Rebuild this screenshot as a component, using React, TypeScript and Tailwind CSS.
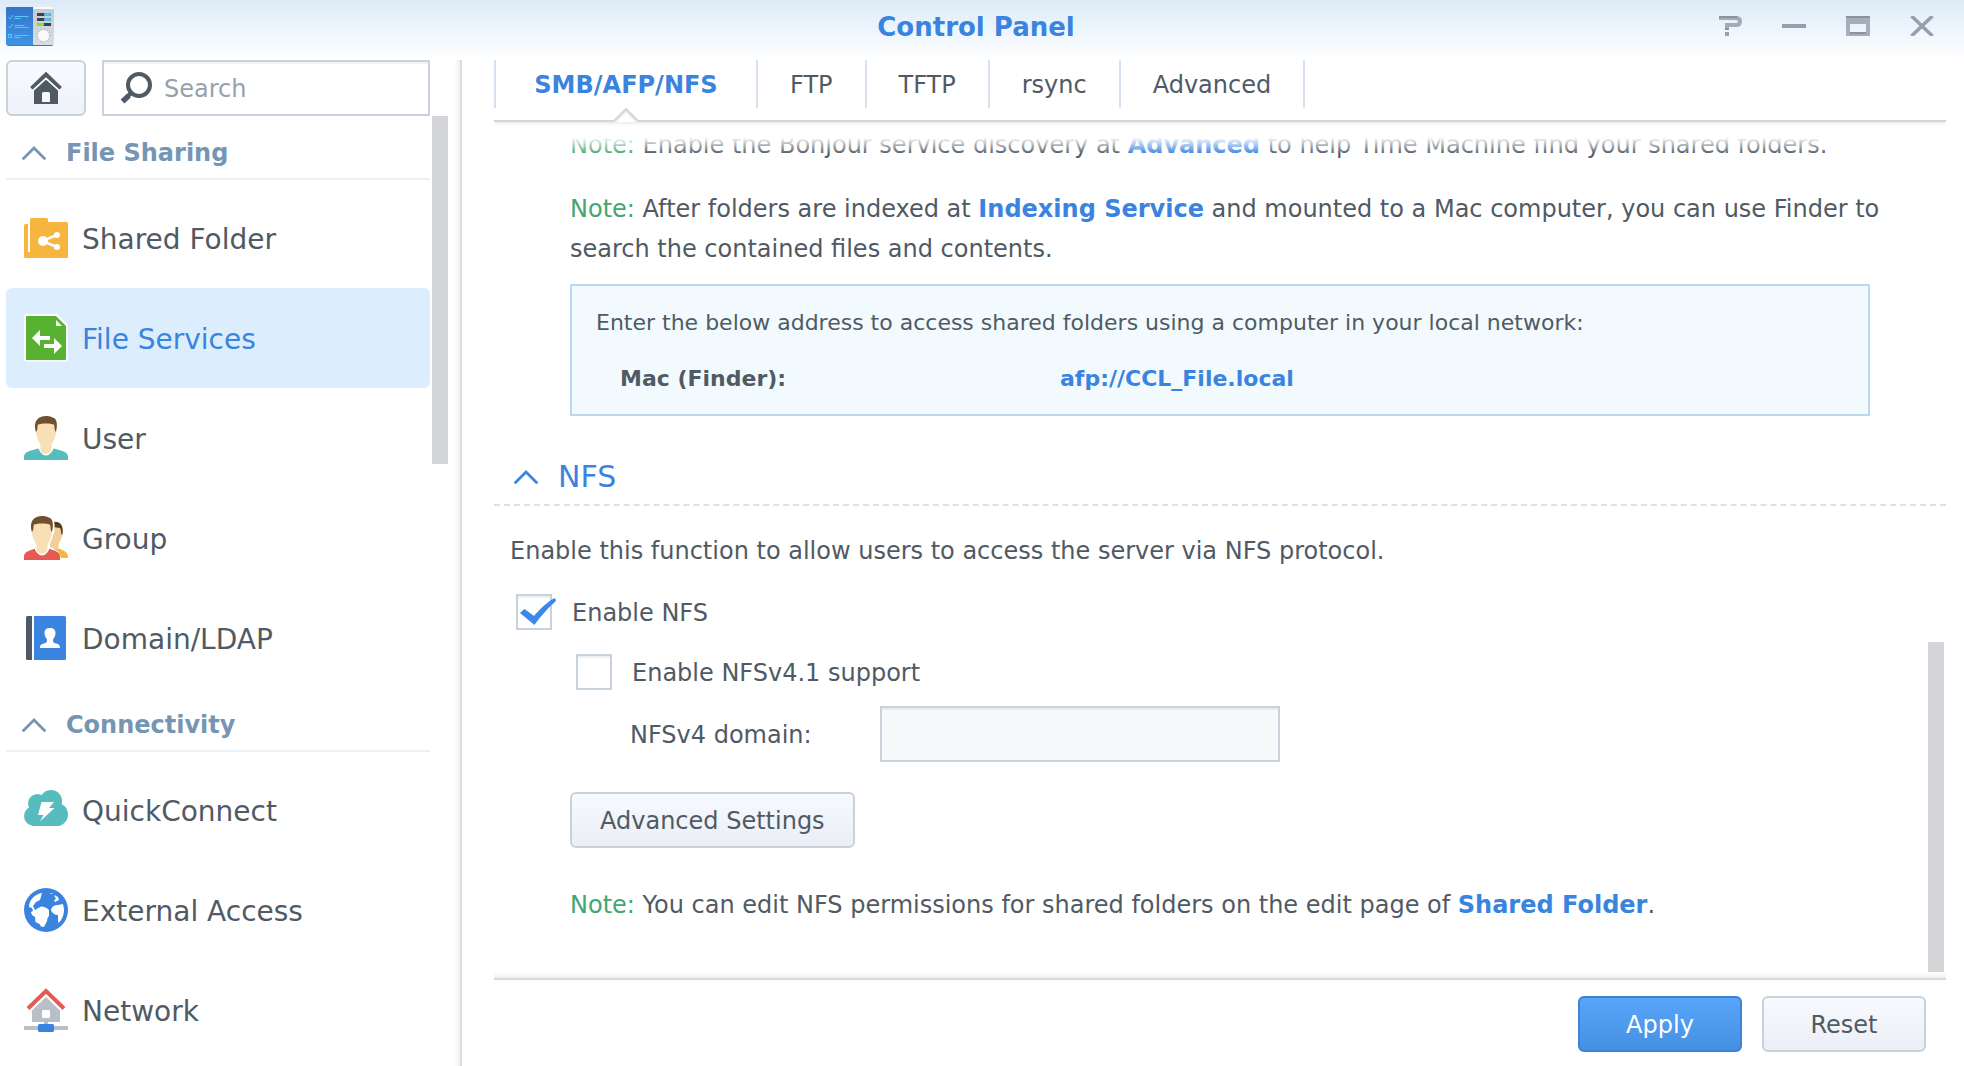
import React, { useState } from "react";

type IconProps = { className?: string };

const AppLogo = () => (
  <svg width="48" height="42" viewBox="0 0 48 42" className="mt-1" aria-hidden="true">
    <defs>
      <linearGradient id="logoBlue" x1="0" y1="0" x2="0" y2="1">
        <stop offset="0" stopColor="#3375c8" />
        <stop offset="1" stopColor="#3f93e4" />
      </linearGradient>
      <linearGradient id="logoGrey" x1="0" y1="0" x2="0" y2="1">
        <stop offset="0" stopColor="#c3cad0" />
        <stop offset="1" stopColor="#d9dee2" />
      </linearGradient>
    </defs>
    <rect x="1" y="35" width="46" height="4" rx="1" fill="#6b7178" />
    <rect x="0" y="0" width="28" height="38" rx="1" fill="url(#logoBlue)" />
    <rect x="27" y="0" width="21" height="38" rx="1" fill="url(#logoGrey)" />
    <rect x="27" y="0" width="21" height="2" rx="1" fill="#f6f8fa" />
    <g stroke="#5fc4f7" fill="none" strokeWidth="1">
      <path d="M2.5 10.5l1.500 1.500 3-4M2.500 19.500l1.500 1.500 3-4" />
      <rect x="2.500" y="27.500" width="3" height="3" />
      <path d="M8.500 9.500h14M8.500 11.500h6M8.500 18.500h10M8.500 20.500h14M8.500 28.500h14M8.500 30.500h6" />
    </g>
    <rect x="31" y="6" width="14" height="3" fill="#3c4249" />
    <rect x="38" y="6" width="7" height="3" rx="1" fill="#52bdf5" />
    <rect x="31" y="11" width="14" height="3" fill="#3c4249" />
    <rect x="38" y="11" width="7" height="3" rx="1" fill="#52bdf5" />
    <rect x="31" y="16" width="14" height="3" fill="#3c4249" />
    <rect x="31" y="16" width="7" height="3" rx="1" fill="#8de03c" />
    <circle cx="37.500" cy="28.500" r="6.500" fill="none" stroke="#a3abb3" strokeWidth="1" strokeDasharray="1 2" />
    <circle cx="37.500" cy="28.500" r="5.500" fill="#f7fbfd" />
  </svg>
);

const HomeIcon = () => (
  <svg width="32" height="32" viewBox="0 0 32 32" aria-hidden="true">
    <path d="M1.500 16.500L16 2.500l14.500 14" fill="none" stroke="#505a64" strokeWidth="4" />
    <path d="M4 18.500L16 7.500l12 11V32H4z" fill="#505a64" />
    <path d="M2.500 18.500L16 6.500l13.500 12" fill="none" stroke="#f6f9fd" strokeWidth="1.500" />
    <path d="M12 30v-8.500q0-1.500 1.500-1.500h5q1.500 0 1.500 1.500V30z" fill="#f6f8fc" />
  </svg>
);

const SearchIcon = () => (
  <svg width="32" height="32" viewBox="0 0 32 32" aria-hidden="true">
    <circle cx="19" cy="13" r="11" fill="none" stroke="#505a64" strokeWidth="4" />
    <path d="M11 21l-3 3" stroke="#505a64" strokeWidth="4" />
    <path d="M9 23.500l-6.500 6" stroke="#505a64" strokeWidth="5.500" />
  </svg>
);

const Chevron = ({ className }: IconProps) => (
  <svg width="24" height="14" viewBox="0 0 24 14" className={className} aria-hidden="true">
    <path d="M1.500 12.500L12 2l10.500 10.500" fill="none" stroke="currentColor" strokeWidth="2.800" strokeLinecap="round" />
  </svg>
);

const FolderIcon = () => (
  <svg width="48" height="48" viewBox="0 0 48 48" aria-hidden="true">
    <rect x="2" y="10" width="8" height="34" rx="1.500" fill="#f5b53f" />
    <path d="M7 9.500v28.500" stroke="#fff" strokeWidth="2" />
    <path d="M8 5.500Q8 4 9.500 4h15Q26 4 26 5.500V8h18.500Q46 8 46 9.500v33q0 1.500-1.500 1.500H8z" fill="#f5b53f" />
    <path d="M35 21L20 27l15 6" fill="none" stroke="#fff" strokeWidth="2.500" />
    <circle cx="21" cy="27" r="5" fill="#fff" />
    <circle cx="35" cy="21" r="3" fill="#fff" />
    <circle cx="35" cy="33" r="3" fill="#fff" />
  </svg>
);

const FileServicesIcon = () => (
  <svg width="48" height="48" viewBox="0 0 48 48" aria-hidden="true">
    <path d="M4.500 0H35l11 11v33.500q0 3-3 3H5q-3 0-3-3V3q0-3 2.500-3z" fill="#fff" />
    <path d="M5 2h29l10 10v33q0 1-1 1H5q-1 0-1-1V3q0-1 1-1z" fill="#58b232" />
    <path d="M34 6v6h6z" fill="#fff" />
    <path d="M10 24l8-8v6h10v4H18v6zM40 32l-8-8v6H22v4h10v6z" fill="#fff" />
  </svg>
);

const UserIcon = () => (
  <svg width="48" height="48" viewBox="0 0 48 48" aria-hidden="true">
    <path d="M2 46v-3c0-5 5-6 14-8.500l8 5.500 8-5.500C41 37 46 38 46 43v3z" fill="#57bcbd" />
    <path d="M17.500 32.500c0 4 3 8 6.500 8s6.500-4 6.500-8z" fill="#f9dfb5" stroke="#fff" strokeWidth="2" />
    <path d="M14 9h20v9c0 6-3.500 9.500-4.500 13.500 0 4 .5 8-5.500 8s-5.500-4-5.500-8C17.500 27.500 14 24 14 18z" fill="#f9dfb5" />
    <path d="M14 18c-2-6-2-15.500 10-16 5 0 6 1.500 8 2 4 2 3 10 2 14-2-2-1-5-2-7.500-4-1.500-12-1.500-16 0-1 2.500 0 5.500-2 7.500z" fill="#71502f" />
  </svg>
);

const GroupIcon = () => (
  <svg width="48" height="48" viewBox="0 0 48 48" aria-hidden="true">
    <path d="M32 34l6 1c5 2 8 3.500 8 8.500v0.500H34z" fill="#f8b53c" />
    <path d="M28 12h12v9c0 5-3 7-3.500 10 .5 2 1 4-3.500 4l-5-2z" fill="#f3cf98" />
    <path d="M31 8c7-1 11 3 9.500 13-2-1-1-5-2.500-7l-7-1z" fill="#573c1e" />
    <path d="M10 5h20l2 2c1 5 1 10-1 15l-3 8v4l8 3 4 9H16z" fill="#fff" />
    <path d="M2 46v-3c0-5 4-6 11-8.500l7 5.500 7-5.500c7 2.500 11 3.500 11 8.500v3z" fill="#e75a54" />
    <path d="M13.500 32.500c0 4 3 8 6.500 8s6.500-4 6.500-8z" fill="#f9dfb5" stroke="#fff" strokeWidth="2" />
    <path d="M10 9h20v9c0 6-3.500 9.500-4.500 13.500 0 4 .5 8-5.500 8s-5.500-4-5.500-8C13.500 27.500 10 24 10 18z" fill="#f9dfb5" />
    <path d="M10 18C8 12 8 2.500 20 2c5 0 6 1.500 8 2 4 2 3 10 2 14-2-2-1-5-2-7.500-4-1.500-12-1.500-16 0-1 2.500 0 5.500-2 7.500z" fill="#71502f" />
  </svg>
);

const DomainIcon = () => (
  <svg width="48" height="48" viewBox="0 0 48 48" aria-hidden="true">
    <path d="M5.500 2H10v44H5.500Q4 46 4 44.500v-41Q4 2 5.500 2z" fill="#505a64" />
    <path d="M12 2h30.500Q44 2 44 3.500v41q0 1.500-1.500 1.500H12z" fill="#3a84e0" />
    <path d="M28 14c4 0 5.500 2 5.500 5s-1.500 5-2.500 6.500c0 2.500 0 3 3 4 3 .8 4 1.500 4 4.500H18c0-3 1-3.700 4-4.500 3-1 3-1.500 3-4-1-1.500-2.500-3.500-2.500-6.500s1.500-5 5.500-5z" fill="#fff" />
  </svg>
);

const QuickConnectIcon = () => (
  <svg width="48" height="48" viewBox="0 0 48 48" aria-hidden="true">
    <g fill="#57bcbd">
      <circle cx="12" cy="30" r="10" />
      <circle cx="15.500" cy="17.500" r="9.500" />
      <circle cx="29" cy="15" r="11" />
      <circle cx="34.500" cy="28.500" r="11.500" />
      <rect x="10" y="18" width="26" height="22" />
    </g>
    <path d="M19.500 16H32l-5 6h5.500L18 35.500 21.500 29H16z" fill="#fff" />
  </svg>
);

const GlobeIcon = () => (
  <svg width="48" height="48" viewBox="0 0 48 48" aria-hidden="true">
    <circle cx="24" cy="24" r="22" fill="#3a84e0" />
    <path d="M20 7c-7 1-13 7-13 14l3 1 1 3-2 1 1 3 3 2 .5 5 4 2 1.500 2.500 3 .5 3-6 .5-3 1.500-2V24c-2-2-5-3.500-8-3.500L13 24l-2-4 3-4 4-2z" fill="#fff" />
    <path d="M29 24c1-4 4-5 7-5l5-1 1 5c0 6-2 11-5.500 14l-.5-2v-6c-3 0-6-1.500-7-5z" fill="#fff" />
    <path d="M32 9l4 2 1 3-4 2-1-2 2-1zM28 7l3 0-2 1z" fill="#fff" />
  </svg>
);

const NetworkIcon = () => (
  <svg width="48" height="48" viewBox="0 0 48 48" aria-hidden="true">
    <path d="M24 11l14 13.500V36H26v3h-4v-3H10V24.500z" fill="#b7bfc9" />
    <rect x="20" y="24" width="8" height="8" rx="1" fill="#fff" />
    <path d="M6 22.500L24 5l18 17.500" fill="none" stroke="#e75a54" strokeWidth="4" strokeLinejoin="miter" />
    <path d="M2 40h44v4H2z" fill="#b7bfc9" />
    <rect x="16" y="38" width="16" height="8" rx="1.500" fill="#3a84e0" />
  </svg>
);

type NavItem = { label: string; icon: () => React.JSX.Element };
type NavGroup = { title: string; items: NavItem[] };

const groups: NavGroup[] = [
  {
    title: "File Sharing",
    items: [
      { label: "Shared Folder", icon: FolderIcon },
      { label: "File Services", icon: FileServicesIcon },
      { label: "User", icon: UserIcon },
      { label: "Group", icon: GroupIcon },
      { label: "Domain/LDAP", icon: DomainIcon },
    ],
  },
  {
    title: "Connectivity",
    items: [
      { label: "QuickConnect", icon: QuickConnectIcon },
      { label: "External Access", icon: GlobeIcon },
      { label: "Network", icon: NetworkIcon },
    ],
  },
];

const tabs = ["SMB/AFP/NFS", "FTP", "TFTP", "rsync", "Advanced"];

const TitleBar = () => (
  <header className="grid h-[60px] shrink-0 grid-cols-[1fr_auto_1fr] items-center bg-linear-to-b from-[#dcebf7] via-[#edf5fd] to-white pb-2 pl-1.5 pr-[18px]">
    <AppLogo />
    <h1 className="pt-0.5 text-[26px] font-bold leading-8 text-[#3a84e0]">Control Panel</h1>
    <div className="mr-2.5 flex items-center gap-9 justify-self-end">
      <button aria-label="Help" className="flex w-7 justify-center">
        <svg width="24" height="20" viewBox="0 0 24 20" aria-hidden="true">
          <path d="M1 2h17q4 0 4 3.500T18 9H9v4" fill="none" stroke="#a3abb6" strokeWidth="4" />
          <path d="M1 0h18v2H1zM7 12h4v2H7z" fill="#8a929d" />
          <path d="M7 16h4v4H7z" fill="#979faa" />
        </svg>
      </button>
      <button aria-label="Minimize" className="flex w-7 justify-center">
        <svg width="24" height="20" viewBox="0 0 24 20" aria-hidden="true">
          <path d="M0 8h24v4H0z" fill="#979faa" />
        </svg>
      </button>
      <button aria-label="Maximize" className="flex w-7 justify-center">
        <svg width="24" height="20" viewBox="0 0 24 20" aria-hidden="true">
          <path d="M0 0h24v20H0zM4 8v8h16V8z" fill="#a6aeb9" fillRule="evenodd" />
          <path d="M0 0h24v2H0zM4 16h16v2H4z" fill="#8a929d" />
        </svg>
      </button>
      <button aria-label="Close" className="flex w-7 justify-center">
        <svg width="24" height="20" viewBox="0 0 24 20" aria-hidden="true">
          <path d="M1.500 0l21 20M22.500 0l-21 20" stroke="#979faa" strokeWidth="3.500" />
        </svg>
      </button>
    </div>
  </header>
);

const Sidebar = () => {
  const [selected, setSelected] = useState("File Services");
  return (
    <aside className="flex w-[462px] shrink-0 border-r-2 border-[#dcdcdc]">
      <div className="flex min-w-0 flex-1 flex-col pl-1.5">
        <div className="flex shrink-0 gap-4 pr-6">
          <button
            aria-label="Home"
            className="flex h-14 w-20 shrink-0 items-center justify-center rounded-md border-2 border-[#c8d2dd] bg-linear-to-b from-[#f7faff] to-[#eff2f8]"
          >
            <HomeIcon />
          </button>
          <label className="flex h-14 min-w-0 flex-1 items-center gap-3 border-2 border-[#c8d2dd] bg-white pl-4 shadow-[inset_0_2px_0_#eff1f4]">
            <SearchIcon />
            <input
              type="search"
              placeholder="Search"
              aria-label="Search"
              className="min-w-0 flex-1 pt-0.5 text-2xl outline-none placeholder:text-[#98a1ab]"
            />
          </label>
        </div>
        <div className="flex min-h-0 flex-1 gap-0.5">
          <nav className="min-w-0 flex-1 overflow-hidden">
            {groups.map((group) => (
              <section key={group.title}>
                <h2 className="mb-2 border-b-2 border-[#ebf0f6]">
                  <button className="flex h-[62px] w-full items-center gap-5 pl-4 pt-3 text-2xl font-bold text-[#7595b3]">
                    <Chevron />
                    {group.title}
                  </button>
                </h2>
                {group.items.map(({ label, icon: Icon }) => (
                  <a
                    key={label}
                    href="#"
                    onClick={() => setSelected(label)}
                    className={
                      label === selected
                        ? "flex h-[100px] items-center gap-3 rounded-md bg-[#dceefd] pl-4 text-[28px] text-[#3a84e0]"
                        : "flex h-[100px] items-center gap-3 rounded-md pl-4 text-[28px]"
                    }
                  >
                    <Icon />
                    <span className="pt-1">{label}</span>
                  </a>
                ))}
              </section>
            ))}
          </nav>
          <div className="h-[348px] w-4 shrink-0 bg-[#d4d5d8]" />
          <div className="w-1 shrink-0" />
        </div>
      </div>
      <div className="w-1.5 shrink-0 bg-linear-to-r from-white to-[#f0f0f0]" />
    </aside>
  );
};

const TabBar = () => (
  <div className="shrink-0 border-b-2 border-[#d4d4d4] pb-3 shadow-[0_3px_3px_-1px_#ececec]">
    <div role="tablist" className="flex h-12 border-l-2 border-[#d8e2ee]">
      {tabs.map((tab, i) => (
        <button
          key={tab}
          role="tab"
          aria-selected={i === 0}
          className={
            i === 0
              ? "relative flex w-[262px] items-center justify-center border-r-2 border-[#d8e2ee] pt-0.5 text-2xl font-bold text-[#3a84e0]"
              : "flex items-center border-r-2 border-[#d8e2ee] px-8 pt-0.5 text-2xl"
          }
        >
          {tab}
          {i === 0 && (
            <svg width="26" height="14" viewBox="0 0 26 14" className="absolute left-1/2 top-full -translate-x-1/2" aria-hidden="true">
              <path d="M1 14L13 1.500 25 14z" fill="#fff" />
              <path d="M2 14.500L13 3.500l11 11" fill="none" stroke="#f0f0f0" strokeWidth="2" />
              <path d="M1 13L13 1l12 12" fill="none" stroke="#d4d4d4" strokeWidth="2" />
            </svg>
          )}
        </button>
      ))}
    </div>
  </div>
);

const Note = ({ children }: { children: React.ReactNode }) => (
  <p>
    <span className="text-[#43a571]">Note:</span> {children}
  </p>
);

const Link = ({ children }: { children: React.ReactNode }) => (
  <a href="#" className="font-bold text-[#3a84e0]">
    {children}
  </a>
);

const Tick = () => (
  <svg width="36" height="28" viewBox="0 0 36 28" className="pointer-events-none absolute left-1 top-1" aria-hidden="true">
    <path d="M0 15l4.500-4L14 18C20 11 28 3 35 0l1 3C28 10 20 19 14.500 27z" fill="#3a89ea" />
  </svg>
);

const CheckRow = ({ id, label, className, defaultChecked }: { id: string; label: string; className: string; defaultChecked?: boolean }) => {
  const [checked, setChecked] = useState(Boolean(defaultChecked));
  return (
    <div className={className}>
      <span className="relative flex">
        <input
          id={id}
          type="checkbox"
          checked={checked}
          onChange={(e) => setChecked(e.target.checked)}
          className="size-9 appearance-none border-2 border-[#c8d2dd] bg-white shadow-[inset_0_2px_1px_#eff1f4]"
        />
        {checked && <Tick />}
      </span>
      <label htmlFor={id} className="pt-0.5 leading-9">
        {label}
      </label>
    </div>
  );
};

const greyButton = "h-14 rounded-md border-2 border-[#c8d2dd] bg-linear-to-b from-[#f7faff] to-[#ebeef4] pt-0.5 text-2xl";

export default function App() {
  return (
    <div className="flex h-screen flex-col overflow-hidden bg-white font-['Verdana','DejaVu_Sans',sans-serif] text-2xl text-[#505a64]">
      <TitleBar />
      <div className="flex min-h-0 flex-1">
        <Sidebar />
        <main className="flex min-w-0 flex-1 flex-col pl-8 pr-[18px]">
          <TabBar />
          <div className="relative flex min-h-0 flex-1">
            <div className="min-w-0 flex-1 overflow-hidden leading-10">
              <div className="flex flex-col gap-6 pl-[76px] pr-9 pt-[3px]">
                <Note>
                  Enable the Bonjour service discovery at <Link>Advanced</Link> to help Time Machine find your shared folders.
                </Note>
                <Note>
                  After folders are indexed at <Link>Indexing Service</Link> and mounted to a Mac computer, you can use Finder to
                  search the contained files and contents.
                </Note>
              </div>
              <div className="ml-[76px] mr-[76px] mt-[15px] border-2 border-[#bcd8f0] bg-[#f2fafe] px-6 pb-[15px] pt-[17px] text-[22px]">
                <p>Enter the below address to access shared folders using a computer in your local network:</p>
                <div className="mt-4 grid grid-cols-[440px_1fr] pl-6 font-bold">
                  <span>Mac (Finder):</span>
                  <Link>afp://CCL_File.local</Link>
                </div>
              </div>
              <h2 className="mt-8 border-b-2 border-dashed border-[#d8e2ee]">
                <button className="flex h-14 items-center gap-5 pl-5 pt-0.5 text-[30px] text-[#3a84e0]">
                  <Chevron />
                  NFS
                </button>
              </h2>
              <p className="mt-[25px] pl-4">Enable this function to allow users to access the server via NFS protocol.</p>
              <CheckRow id="enable-nfs" label="Enable NFS" defaultChecked className="mt-[22px] flex items-center gap-5 pl-[22px]" />
              <CheckRow id="enable-nfs4" label="Enable NFSv4.1 support" className="mt-[22px] flex items-center gap-5 pl-[82px]" />
              <div className="mt-[15px] flex items-center pl-[136px]">
                <label htmlFor="nfs-domain" className="w-[250px] pt-0.5">
                  NFSv4 domain:
                </label>
                <input
                  id="nfs-domain"
                  type="text"
                  disabled
                  className="h-14 w-[400px] border-2 border-[#c8d2dd] bg-[#f6f8fa] px-3 shadow-[inset_0_2px_0_#e8ebee]"
                />
              </div>
              <div className="flex flex-col items-start gap-[37px] pl-[76px] pt-[30px]">
                <button className={`${greyButton} px-7`}>Advanced Settings</button>
                <Note>
                  You can edit NFS permissions for shared folders on the edit page of <Link>Shared Folder</Link>.
                </Note>
              </div>
            </div>
            <div className="absolute inset-x-0 top-2 h-6 bg-linear-to-b from-white from-30% to-transparent" />
            <div className="absolute bottom-0 right-0.5 h-[330px] w-4 bg-[#d4d5d8]" />
          </div>
          <footer className="shrink-0">
            <div className="h-2 border-b-2 border-[#d9d9d9] bg-linear-to-b from-white to-[#f0f0f0]" />
            <div className="flex h-[86px] items-start justify-end gap-5 pr-5 pt-4">
              <button className="h-14 w-[164px] rounded-md border-2 border-[#3c82d5] bg-linear-to-b from-[#58a5fa] to-[#4590e3] pt-0.5 text-2xl text-white">
                Apply
              </button>
              <button className={`${greyButton} w-[164px]`}>Reset</button>
            </div>
          </footer>
        </main>
      </div>
    </div>
  );
}
